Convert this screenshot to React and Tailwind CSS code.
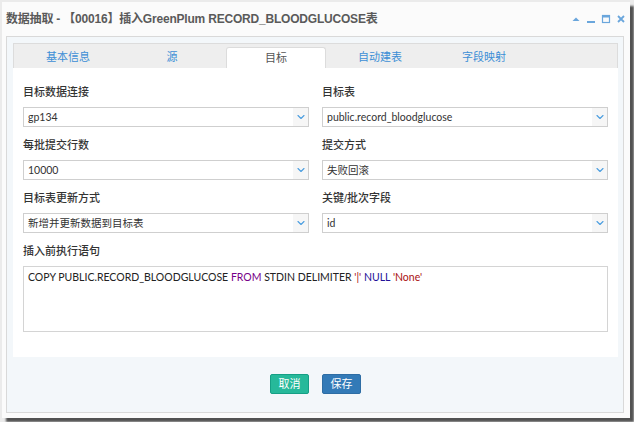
import { ChevronDown } from 'lucide-react';

const font = { fontFamily: '"Liberation Sans", "Noto Sans CJK SC", sans-serif' };
const lato = { fontFamily: 'Lato, "Noto Sans CJK SC", sans-serif' };

function Select({ value }) {
  return (
    <div className="flex h-[20px] items-stretch border border-[#cfcfcf] bg-white">
      <div className="flex-1 truncate pl-[4px] text-[10.5px] leading-[18px] text-[#333]" style={lato}>{value}</div>
      <div className="flex w-[15px] items-center justify-center bg-[#f6f6f6]">
        <ChevronDown size={12} strokeWidth={2.2} className="text-[#4a9de0]" />
      </div>
    </div>
  );
}

function Field({ label, value }) {
  return (
    <div className="mb-[9px]">
      <div className="mb-[6px] h-[18px] text-[11px] font-medium leading-[18px] text-[#333]">{label}</div>
      <Select value={value} />
    </div>
  );
}

function WinIcons() {
  return (
    <div className="flex items-center gap-[5px] pr-[4px] text-[#6aa6dc]">
      <svg width="10" height="10" viewBox="0 0 10 10"><path d="M1.5 7 L5 3.5 L8.5 7 Z" fill="currentColor" /></svg>
      <svg width="10" height="10" viewBox="0 0 10 10"><rect x="1" y="7" width="8" height="2" fill="currentColor" /></svg>
      <svg width="10" height="10" viewBox="0 0 10 10"><rect x="1.5" y="1.5" width="7" height="7" fill="none" stroke="currentColor" strokeWidth="1.2" /><rect x="1.5" y="1.5" width="7" height="2" fill="currentColor" /></svg>
      <svg width="10" height="10" viewBox="0 0 10 10"><path d="M2 2 L8 8 M8 2 L2 8" stroke="currentColor" strokeWidth="1.8" /></svg>
    </div>
  );
}

const tabs = ['基本信息', '源', '目标', '自动建表', '字段映射'];

export default function App() {
  return (
    <div className="h-[422px] w-[634px] overflow-hidden bg-[#ebebeb] pl-[2px] pt-[2px]" style={font}>
      <div className="flex h-[416px] w-[628px] flex-col bg-[#fbfbfb] shadow-[4px_4px_2px_rgba(0,0,0,0.65)]">
        <div className="flex h-[34px] items-center justify-between pl-[4px]">
          <div className="text-[12px] font-bold tracking-[-0.2px] text-[#5a5a5a]">数据抽取 - 【00016】插入GreenPlum RECORD_BLOODGLUCOSE表</div>
          <WinIcons />
        </div>
        <div className="mb-[5px] ml-[4px] mr-[6px] flex flex-1 flex-col border border-[#d9d9d9] bg-[#f3f7fa] pl-[6px] pr-[5px] pt-[6px]">
          <div className="flex h-[25px] items-end gap-[4px] border border-b-0 border-[#dcdcdc] bg-[#eeeeee] pl-[4px]">
            {tabs.map((t) => (
              <div
                key={t}
                className={
                  t === '目标'
                    ? 'flex h-[21px] w-[100px] items-center justify-center rounded-t-[3px] border border-b-0 border-[#dcdcdc] bg-white text-[11px] text-[#555]'
                    : 'flex h-[21px] w-[100px] items-center justify-center text-[11px] text-[#3d8fd6]'
                }
              >
                {t}
              </div>
            ))}
          </div>
          <div className="h-[289px] bg-white px-[10px] pt-[15px]">
            <div className="grid grid-cols-2 gap-x-[13px]">
              <Field label="目标数据连接" value="gp134" />
              <Field label="目标表" value="public.record_bloodglucose" />
              <Field label="每批提交行数" value="10000" />
              <Field label="提交方式" value="失败回滚" />
              <Field label="目标表更新方式" value="新增并更新数据到目标表" />
              <Field label="关键/批次字段" value="id" />
            </div>
            <div className="mb-[6px] h-[18px] text-[11px] font-medium leading-[18px] text-[#333]">插入前执行语句</div>
            <div className="h-[66px] border border-[#d4d4d4] bg-white px-[4px] pt-[3px] text-[10.5px] text-[#222]" style={lato}>
              COPY PUBLIC.RECORD_BLOODGLUCOSE <span className="text-[#770088]">FROM</span> STDIN DELIMITER{' '}
              <span className="text-[#aa1111]">'|'</span> <span className="text-[#221199]">NULL</span>{' '}
              <span className="text-[#aa1111]">'None'</span>
            </div>
          </div>
          <div className="mt-[17px] flex justify-center gap-[13px]">
            <button className="h-[20px] w-[39px] rounded-[2px] border border-[#169f85] bg-[#26b99a] text-[11px] text-white">取消</button>
            <button className="h-[20px] w-[39px] rounded-[2px] border border-[#2e6da4] bg-[#337ab7] text-[11px] text-white">保存</button>
          </div>
        </div>
      </div>
    </div>
  );
}
